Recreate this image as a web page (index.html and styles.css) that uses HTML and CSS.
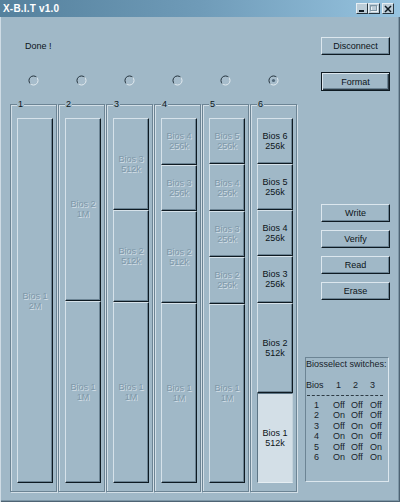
FILE: index.html
```html
<!DOCTYPE html>
<html lang="en">
<head>
    <meta charset="UTF-8">
    <meta name="viewport" content="width=device-width, initial-scale=1.0">
    <title>X-B.I.T v1.0</title>
    <link rel="stylesheet" href="styles.css">
</head>
<body>
    <div class="window">
        <!-- Title bar -->
        <div class="titlebar">
            <span class="title">X-B.I.T v1.0</span>
            <div class="caption-buttons">
                <span class="cap-btn">
                    <svg width="8" height="8" viewBox="0 0 8 8"><rect x="1" y="5" width="5" height="2" fill="#0e1a22"/></svg>
                </span>
                <span class="cap-btn">
                    <svg width="8" height="8" viewBox="0 0 8 8"><rect x="1.5" y="1.5" width="6" height="5" fill="none" stroke="#eef3f6"/><rect x="0.5" y="0.5" width="6" height="5" fill="none" stroke="#7f96a5"/><rect x="0.5" y="0.5" width="6" height="1" fill="#7f96a5"/></svg>
                </span>
                <span class="cap-btn close">
                    <svg width="8" height="8" viewBox="0 0 8 8"><path d="M1 1L7 7M7 1L1 7" stroke="#0e1a22" stroke-width="1.5"/></svg>
                </span>
            </div>
        </div>

        <div class="client">
            <!-- Left: status, bank selectors, bios layout -->
            <div class="left">
                <div class="status">Done !</div>

                <div class="radios">
                    <span class="radio"><svg width="11" height="11" viewBox="0 0 11 11"><circle cx="5.5" cy="5.5" r="4.5" fill="#a6bccb"/><path d="M2.3 8.7A4.5 4.5 0 0 1 8.7 2.3" fill="none" stroke="#22313b"/><path d="M8.7 2.3A4.5 4.5 0 0 1 2.3 8.7" fill="none" stroke="#e2eaef"/></svg></span>
                    <span class="radio"><svg width="11" height="11" viewBox="0 0 11 11"><circle cx="5.5" cy="5.5" r="4.5" fill="#a6bccb"/><path d="M2.3 8.7A4.5 4.5 0 0 1 8.7 2.3" fill="none" stroke="#22313b"/><path d="M8.7 2.3A4.5 4.5 0 0 1 2.3 8.7" fill="none" stroke="#e2eaef"/></svg></span>
                    <span class="radio"><svg width="11" height="11" viewBox="0 0 11 11"><circle cx="5.5" cy="5.5" r="4.5" fill="#a6bccb"/><path d="M2.3 8.7A4.5 4.5 0 0 1 8.7 2.3" fill="none" stroke="#22313b"/><path d="M8.7 2.3A4.5 4.5 0 0 1 2.3 8.7" fill="none" stroke="#e2eaef"/></svg></span>
                    <span class="radio"><svg width="11" height="11" viewBox="0 0 11 11"><circle cx="5.5" cy="5.5" r="4.5" fill="#a6bccb"/><path d="M2.3 8.7A4.5 4.5 0 0 1 8.7 2.3" fill="none" stroke="#22313b"/><path d="M8.7 2.3A4.5 4.5 0 0 1 2.3 8.7" fill="none" stroke="#e2eaef"/></svg></span>
                    <span class="radio"><svg width="11" height="11" viewBox="0 0 11 11"><circle cx="5.5" cy="5.5" r="4.5" fill="#a6bccb"/><path d="M2.3 8.7A4.5 4.5 0 0 1 8.7 2.3" fill="none" stroke="#22313b"/><path d="M8.7 2.3A4.5 4.5 0 0 1 2.3 8.7" fill="none" stroke="#e2eaef"/></svg></span>
                    <span class="radio"><svg width="11" height="11" viewBox="0 0 11 11"><circle cx="5.5" cy="5.5" r="4.5" fill="#a6bccb"/><path d="M2.3 8.7A4.5 4.5 0 0 1 8.7 2.3" fill="none" stroke="#22313b"/><path d="M8.7 2.3A4.5 4.5 0 0 1 2.3 8.7" fill="none" stroke="#e2eaef"/><circle cx="5.5" cy="5.5" r="1.6" fill="#52697a"/></svg></span>
                </div>

                <div class="groups">
                    <div class="group">
                        <span class="group-label">1</span>
                        <div class="stack">
                            <div class="bios s8">Bios 1<br>2M</div>
                        </div>
                    </div>
                    <div class="group">
                        <span class="group-label">2</span>
                        <div class="stack">
                            <div class="bios s4">Bios 2<br>1M</div>
                            <div class="bios s4">Bios 1<br>1M</div>
                        </div>
                    </div>
                    <div class="group">
                        <span class="group-label">3</span>
                        <div class="stack">
                            <div class="bios s2">Bios 3<br>512k</div>
                            <div class="bios s2">Bios 2<br>512k</div>
                            <div class="bios s4">Bios 1<br>1M</div>
                        </div>
                    </div>
                    <div class="group">
                        <span class="group-label">4</span>
                        <div class="stack">
                            <div class="bios">Bios 4<br>256k</div>
                            <div class="bios">Bios 3<br>256k</div>
                            <div class="bios s2">Bios 2<br>512k</div>
                            <div class="bios s4">Bios 1<br>1M</div>
                        </div>
                    </div>
                    <div class="group">
                        <span class="group-label">5</span>
                        <div class="stack">
                            <div class="bios">Bios 5<br>256k</div>
                            <div class="bios">Bios 4<br>256k</div>
                            <div class="bios">Bios 3<br>256k</div>
                            <div class="bios">Bios 2<br>256k</div>
                            <div class="bios s4">Bios 1<br>1M</div>
                        </div>
                    </div>
                    <div class="group">
                        <span class="group-label">6</span>
                        <div class="stack">
                            <div class="bios on">Bios 6<br>256k</div>
                            <div class="bios on">Bios 5<br>256k</div>
                            <div class="bios on">Bios 4<br>256k</div>
                            <div class="bios on">Bios 3<br>256k</div>
                            <div class="bios on s2">Bios 2<br>512k</div>
                            <div class="bios on picked s2">Bios 1<br>512k</div>
                        </div>
                    </div>
                </div>
            </div>

            <!-- Right: actions and switch table -->
            <div class="right">
                <button class="btn btn-disconnect">Disconnect</button>
                <button class="btn btn-default btn-format">Format</button>
                <button class="btn btn-write">Write</button>
                <button class="btn btn-next">Verify</button>
                <button class="btn btn-next">Read</button>
                <button class="btn btn-next">Erase</button>

                <div class="switches">
                    <div class="sw-title">Biosselect switches:</div>
                    <div class="sw-grid sw-head"><span>Bios</span><span>1</span><span>2</span><span>3</span></div>
                    <div class="sw-rule"></div>
                    <div class="sw-grid sw-rows">
                        <span>1</span><span>Off</span><span>Off</span><span>Off</span>
                        <span>2</span><span>On</span><span>Off</span><span>Off</span>
                        <span>3</span><span>Off</span><span>On</span><span>Off</span>
                        <span>4</span><span>On</span><span>On</span><span>Off</span>
                        <span>5</span><span>Off</span><span>Off</span><span>On</span>
                        <span>6</span><span>On</span><span>Off</span><span>On</span>
                    </div>
                </div>
            </div>
        </div>
    </div>
</body>
</html>
```

FILE: styles.css
```css
/* Page and window frame */
body {
    margin: 0;
    font-family: "Liberation Sans", Arial, sans-serif;
    font-size: 9px;
    color: #0c1419;
    background: #a0b8c7;
}

.window {
    width: 400px;
    height: 502px;
    background: #a0b8c7;
    box-shadow: inset 1px 0 0 #cfdce5, inset -1px -1px 0 #4e6474, inset -2px -2px 0 #7e97a7;
    overflow: hidden;
}

/* Title bar */
.titlebar {
    height: 17px;
    display: flex;
    align-items: center;
    justify-content: space-between;
    padding: 0 6px 0 3px;
    background: linear-gradient(to right, #55819d, #6f9bb8 50%, #97c4e0);
}

.title {
    color: #fff;
    font-weight: bold;
    font-size: 10px;
    letter-spacing: 0.2px;
}

.caption-buttons {
    display: flex;
}

.cap-btn {
    width: 12px;
    height: 11px;
    box-sizing: border-box;
    background: #bccdd8;
    border: 1px solid;
    border-color: #e6eef3 #27353e #27353e #e6eef3;
    display: flex;
    align-items: center;
    justify-content: center;
}

.cap-btn.close {
    margin-left: 2px;
}

/* Client area */
.client {
    display: flex;
    padding-left: 10px;
}

.left {
    width: 288px;
    display: flex;
    flex-direction: column;
}

.status {
    margin: 24px 0 0 15px;
    line-height: 10px;
}

.radios {
    display: flex;
    height: 11px;
    margin: 24px 0 0 -1px;
}

.radio {
    width: 48.8px;
    display: flex;
    justify-content: center;
}

/* Bank group boxes */
.groups {
    display: flex;
    gap: 1px;
    margin-top: 18px;
}

.group {
    width: 47px;
    height: 388px;
    box-sizing: border-box;
    border: 1px solid #6c8494;
    box-shadow: inset 1px 1px 0 #d3dfe7, 1px 1px 0 #d3dfe7;
    padding: 0 3px 0 6px;
    display: flex;
    flex-direction: column;
}

.group-label {
    align-self: flex-start;
    margin-top: -6px;
    padding: 0 1px;
    line-height: 10px;
    background: #a0b8c7;
}

.stack {
    margin-top: 9px;
    height: 365px;
    display: flex;
    flex-direction: column;
}

/* Bios blocks */
.bios {
    flex: 1 1 0;
    min-height: 0;
    box-sizing: border-box;
    border: 1px solid;
    border-color: #d6e2ea #0e1a22 #0e1a22 #d6e2ea;
    box-shadow: inset -1px -1px 0 #6c8494;
    display: flex;
    align-items: center;
    justify-content: center;
    text-align: center;
    line-height: 10px;
    color: #7f98a9;
    text-shadow: 1px 1px 0 #d2dee6;
}

.s2 { flex-grow: 2; }
.s4 { flex-grow: 4; }
.s8 { flex-grow: 8; }

.bios.on {
    color: #0c1419;
    text-shadow: none;
}

.bios.picked {
    background: #d3dfe7;
    border-color: #5d7585 #c4d3dc #e6eef3 #5d7585;
    box-shadow: none;
}

/* Right column */
.right {
    width: 85px;
    margin-left: 7px;
    display: flex;
    flex-direction: column;
    align-items: flex-end;
}

.btn {
    width: 69px;
    height: 18px;
    padding: 0;
    margin: 0;
    font: inherit;
    color: #0c1419;
    background: #a0b8c7;
    border: 1px solid;
    border-color: #dce7ee #0e1a22 #0e1a22 #dce7ee;
    box-shadow: inset -1px -1px 0 #6c8494;
}

.btn-default {
    height: 19px;
    border: 1px solid #0e1a22;
    box-shadow: inset 1px 1px 0 #dce7ee, inset -1px -1px 0 #2b3a44, inset -2px -2px 0 #6c8494;
}

.btn-disconnect { margin-top: 20px; }
.btn-format { margin-top: 17px; }
.btn-write { margin-top: 113px; }
.btn-next { margin-top: 8px; }

/* Switch table */
.switches {
    align-self: flex-start;
    width: 84px;
    height: 125px;
    margin-top: 57px;
    box-sizing: border-box;
    border: 1px solid;
    border-color: #6c8494 #dce7ee #dce7ee #6c8494;
    padding-top: 1px;
    color: #18232a;
    line-height: 10px;
}

.sw-grid {
    display: grid;
    grid-template-columns: 27px 18px 19px 1fr;
}

.sw-head {
    margin-top: 11px;
}

.sw-head span:nth-child(2) { padding-left: 3px; }
.sw-head span:nth-child(3) { padding-left: 2px; }

.sw-rule {
    width: 76px;
    margin: 5px 0 0 1px;
    border-top: 1px dashed #2e3c45;
}

.sw-rows {
    margin-top: 4px;
    line-height: 10.4px;
}

.sw-rows span:nth-child(4n+1) {
    padding-left: 8px;
}
```
